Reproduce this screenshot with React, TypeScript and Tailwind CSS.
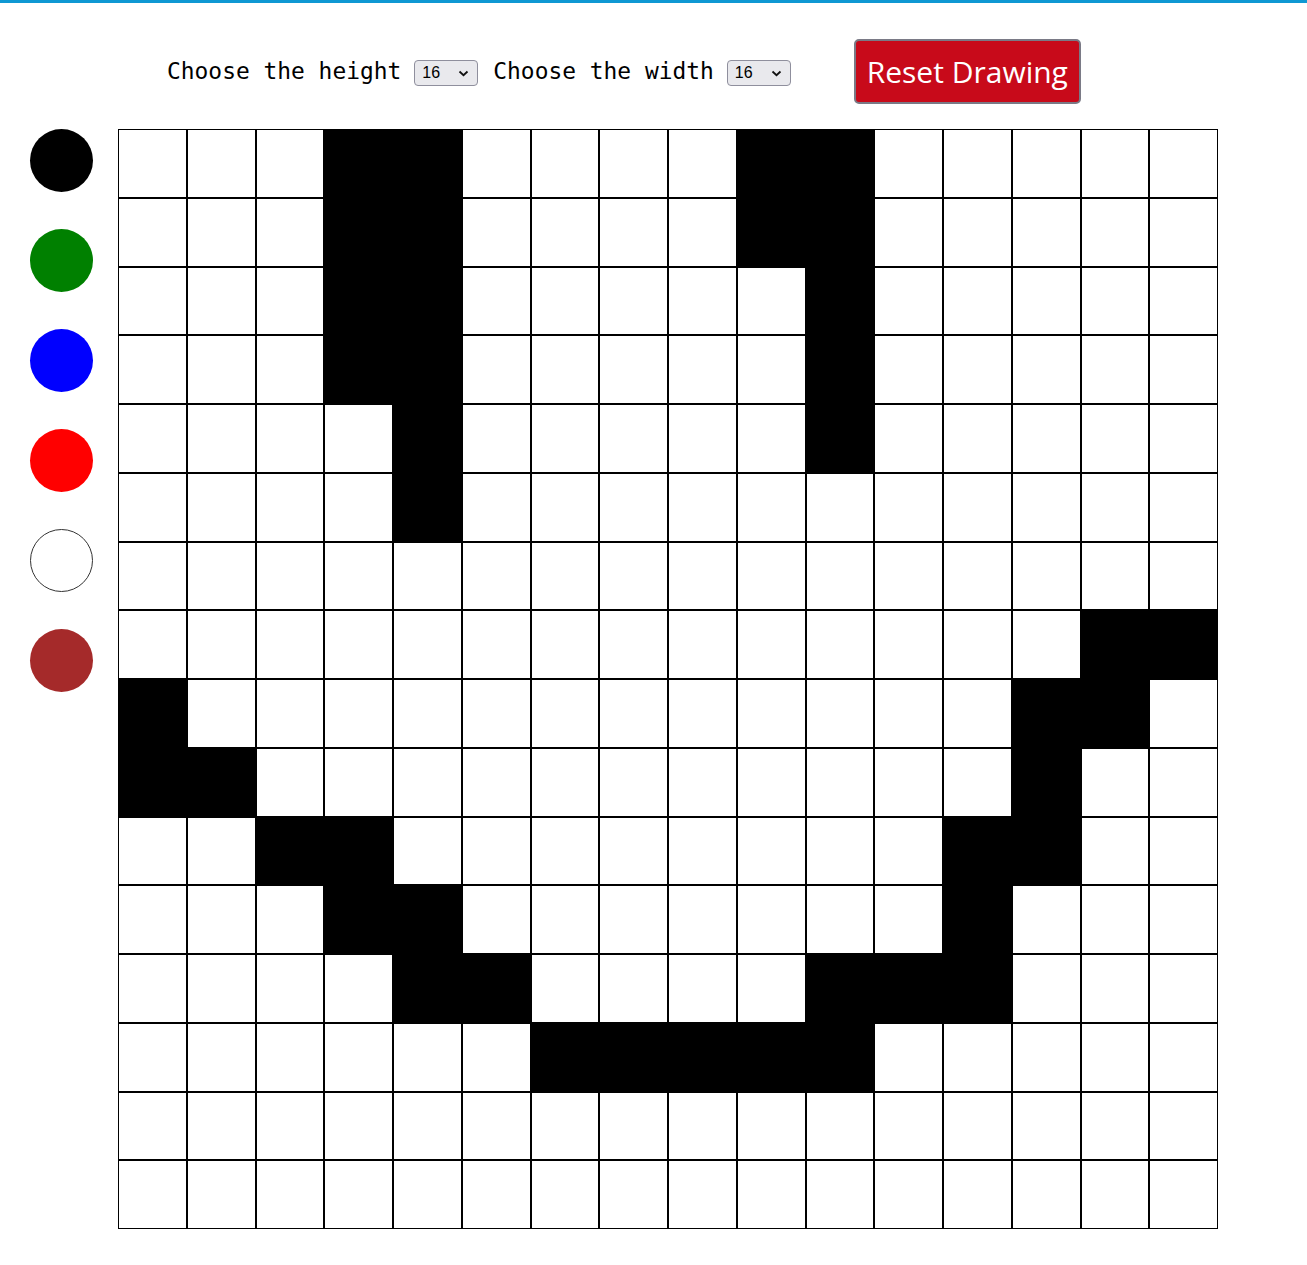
import React, { useState } from "react";

const SIZE = 16;

// cells painted black in the picture: [row, cols]
const PAINTED: [number, number[]][] = [
  [0, [3, 4, 9, 10]],
  [1, [3, 4, 9, 10]],
  [2, [3, 4, 10]],
  [3, [3, 4, 10]],
  [4, [4, 10]],
  [5, [4]],
  [7, [14, 15]],
  [8, [0, 13, 14]],
  [9, [0, 1, 13]],
  [10, [2, 3, 12, 13]],
  [11, [3, 4, 12]],
  [12, [4, 5, 10, 11, 12]],
  [13, [6, 7, 8, 9, 10]],
];

function startGrid() {
  const g: string[][] = Array.from({ length: SIZE }, () => Array(SIZE).fill("white"));
  PAINTED.forEach(([r, cols]) => cols.forEach((c) => (g[r][c] = "black")));
  return g;
}

const COLORS = [
  { name: "black", cls: "bg-black" },
  { name: "green", cls: "bg-[#008000]" },
  { name: "blue", cls: "bg-[#0000ff]" },
  { name: "red", cls: "bg-[#ff0000]" },
  { name: "white", cls: "bg-white border border-[#333]" },
  { name: "brown", cls: "bg-[#a52a2a]" },
];

function SizeSelect({ value, onChange }: { value: number; onChange: (v: number) => void }) {
  return (
    <div className="relative">
      <select
        value={value}
        onChange={(e) => onChange(Number(e.target.value))}
        className="h-[26px] w-[64px] appearance-none rounded-[4px] border border-[#8f8f9d] bg-[#e9e9ed] pl-[7px] text-[16px] text-black"
        style={{ fontFamily: '"Liberation Sans", Arial, sans-serif' }}
      >
        {[8, 16, 32].map((n) => (
          <option key={n} value={n}>{n}</option>
        ))}
      </select>
      <svg className="pointer-events-none absolute right-[9px] top-[10px]" width="11" height="7" viewBox="0 0 11 7">
        <path d="M1.5 1.5 L5.5 5.2 L9.5 1.5" fill="none" stroke="#111" strokeWidth="1.8" />
      </svg>
    </div>
  );
}

export default function App() {
  const [grid, setGrid] = useState(startGrid);
  const [color, setColor] = useState("black");
  const [h, setH] = useState(16);
  const [w, setW] = useState(16);

  const paint = (r: number, c: number) =>
    setGrid((g) => g.map((row, ri) => (ri === r ? row.map((v, ci) => (ci === c ? color : v)) : row)));

  return (
    <div className="min-h-screen w-full bg-white">
      <div className="h-[3px] w-full bg-[#0f98d3]" />

      {/* Header */}
      <div className="flex h-[126px] items-center pl-[167px] pt-[10px]" style={{ fontFamily: '"DejaVu Sans Mono", monospace' }}>
        <span className="text-[22.9px] text-black">Choose the height</span>
        <div className="ml-[13px] mt-[3px]">
          <SizeSelect value={h} onChange={setH} />
        </div>
        <span className="ml-[15px] text-[22.9px] text-black">Choose the width</span>
        <div className="ml-[13px] mt-[3px]">
          <SizeSelect value={w} onChange={setW} />
        </div>
        <button
          onClick={() => setGrid(Array.from({ length: SIZE }, () => Array(SIZE).fill("white")))}
          className="ml-[63px] h-[65px] w-[227px] rounded-[5px] border-2 border-[#7a7a86] bg-[#c80a1a] text-[30px] text-white"
          style={{ fontFamily: '"Open Sans", "Noto Sans", sans-serif' }}
        >
          Reset Drawing
        </button>
      </div>

      {/* Palette + grid */}
      <div className="flex items-start pl-[30px]">
        <div className="flex w-[63px] flex-col gap-[37px]">
          {COLORS.map((c) => (
            <button
              key={c.name}
              onClick={() => setColor(c.name)}
              className={`h-[63px] w-[63px] rounded-full ${c.cls}`}
            />
          ))}
        </div>

        <div className="ml-[25px] grid w-[1100px] grid-cols-16">
          {grid.map((row, r) =>
            row.map((v, c) => (
              <div
                key={`${r}-${c}`}
                onMouseDown={() => paint(r, c)}
                className={`h-[68.75px] border border-black ${v === "black" ? "bg-black" : v === "white" ? "bg-white" : ""}`}
                style={v !== "black" && v !== "white" ? { backgroundColor: v } : undefined}
              />
            ))
          )}
        </div>
      </div>
    </div>
  );
}
